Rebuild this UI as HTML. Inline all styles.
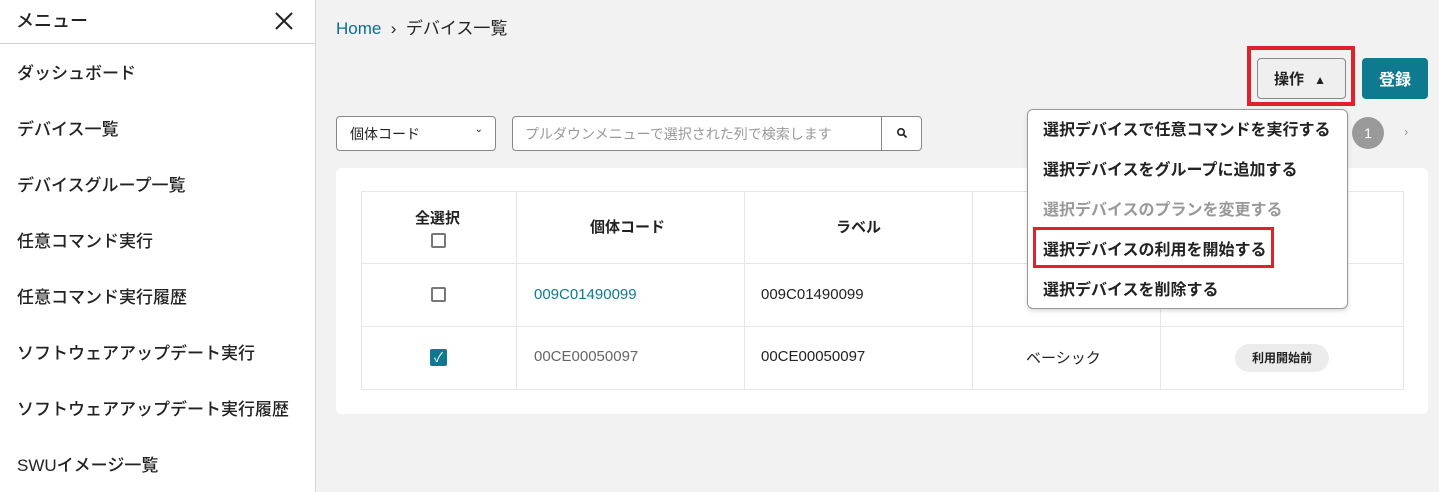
<!DOCTYPE html><html><head><meta charset="utf-8"><style>
*{box-sizing:border-box;margin:0;padding:0}
body{width:1439px;height:492px;overflow:hidden;background:#f2f2f2;font-family:"Liberation Sans","Noto Sans CJK JP",sans-serif;color:#222;position:relative}
.a{position:absolute}
.side{left:0;top:0;width:316px;height:492px;background:#fff;border-right:1px solid #d6d6d6}
.side .hd{height:44px;border-bottom:1px solid #cfcfcf;font-size:18px;font-weight:500;padding:7px 0 0 16px}
.side .it{position:absolute;left:17px;font-size:17px;font-weight:500}
.cb{position:absolute;width:15px;height:15px;border:2px solid #777;border-radius:2px;background:#fff}
.menu div{position:absolute;left:15px;font-size:16px;font-weight:700;color:#222}
</style></head><body>
<div class="a side"><div class="hd">メニュー</div>
<svg class="a" style="left:274px;top:11px" width="20" height="20"><path d="M2 2L18 18M18 2L2 18" stroke="#222" stroke-width="2"/></svg>
<div class="it" style="top:59px">ダッシュボード</div>
<div class="it" style="top:115px">デバイス一覧</div>
<div class="it" style="top:171px">デバイスグループ一覧</div>
<div class="it" style="top:227px">任意コマンド実行</div>
<div class="it" style="top:283px">任意コマンド実行履歴</div>
<div class="it" style="top:339px">ソフトウェアアップデート実行</div>
<div class="it" style="top:395px">ソフトウェアアップデート実行履歴</div>
<div class="it" style="top:451px">SWUイメージ一覧</div>
</div>
<div class="a" style="left:336px;top:14px;font-size:17px"><span style="color:#0b6f8f">Home</span> &nbsp;›&nbsp; デバイス一覧</div>
<div class="a" style="left:1247px;top:46px;width:108px;height:60px;border:4px solid #e0202a"></div>
<div class="a" style="left:1257px;top:58px;width:89px;height:41px;border:1px solid #888;border-radius:4px;background:#efefef;font-size:15px;font-weight:700;padding:9px 0 0 16px">操作 <span style="font-size:12px;margin-left:6px">▲</span></div>
<div class="a" style="left:1362px;top:58px;width:66px;height:41px;background:#0e7a90;border-radius:4px;color:#fff;font-size:16px;font-weight:700;padding:8px 0 0 17px">登録</div>
<div class="a" style="left:336px;top:116px;width:160px;height:35px;border:1px solid #888;border-radius:4px;background:#fff;font-size:14px;padding:7px 0 0 13px">個体コード<span style="position:absolute;right:12px;top:7px;font-size:10px">⌄</span></div>
<div class="a" style="left:512px;top:116px;width:410px;height:35px;border:1px solid #888;border-radius:4px;background:#fff;font-size:14px;color:#999;padding:7px 0 0 12px">プルダウンメニューで選択された列で検索します</div>
<div class="a" style="left:881px;top:116px;width:1px;height:35px;background:#888"></div>
<svg class="a" style="left:896px;top:127px" width="12" height="12"><circle cx="5" cy="5" r="3.2" stroke="#222" stroke-width="1.6" fill="none"/><path d="M7.5 7.5L10.5 10.5" stroke="#222" stroke-width="1.8"/></svg>
<div class="a" style="left:1352px;top:117px;width:32px;height:32px;border-radius:50%;background:#9a9a9a;color:#fff;font-size:14px;text-align:center;line-height:32px">1</div>
<div class="a" style="left:1404px;top:124px;color:#999;font-size:13px">›</div>
<div class="a" style="left:336px;top:168px;width:1092px;height:246px;background:#fff;border-radius:6px"></div>
<div class="a" style="left:361px;top:191px;width:1043px;height:199px;border:1px solid #e6e6e6"></div>
<div class="a" style="left:361px;top:263px;width:1043px;height:1px;background:#e6e6e6"></div>
<div class="a" style="left:361px;top:326px;width:1043px;height:1px;background:#e6e6e6"></div>
<div class="a" style="left:516px;top:191px;width:1px;height:199px;background:#e6e6e6"></div>
<div class="a" style="left:744px;top:191px;width:1px;height:199px;background:#e6e6e6"></div>
<div class="a" style="left:972px;top:191px;width:1px;height:199px;background:#e6e6e6"></div>
<div class="a" style="left:1160px;top:191px;width:1px;height:199px;background:#e6e6e6"></div>
<div class="a" style="left:415px;top:207px;font-size:15px;font-weight:700">全選択</div>
<div class="cb" style="left:431px;top:233px"></div>
<div class="a" style="left:590px;top:216px;font-size:15px;font-weight:700">個体コード</div>
<div class="a" style="left:836px;top:216px;font-size:15px;font-weight:700">ラベル</div>
<div class="cb" style="left:431px;top:287px"></div>
<div class="a" style="left:534px;top:286px;font-size:15px;color:#0e7a90">009C01490099</div>
<div class="a" style="left:761px;top:286px;font-size:15px">009C01490099</div>
<div class="a" style="left:430px;top:349px;width:17px;height:17px;background:#0e7a90;border-radius:2px;color:#fff;font-size:13px;text-align:center;line-height:17px">✓</div>
<div class="a" style="left:534px;top:348px;font-size:15px;color:#666">00CE00050097</div>
<div class="a" style="left:761px;top:348px;font-size:15px">00CE00050097</div>
<div class="a" style="left:1026px;top:347px;font-size:15px">ベーシック</div>
<div class="a" style="left:1235px;top:344px;width:94px;height:28px;background:#ececec;border-radius:14px;font-size:12px;font-weight:700;text-align:center;line-height:28px">利用開始前</div>
<div class="a menu" style="left:1027px;top:109px;width:321px;height:200px;background:#fff;border:1px solid #999;border-radius:6px;box-shadow:0 2px 4px rgba(0,0,0,.15)">
<div style="top:6px">選択デバイスで任意コマンドを実行する</div>
<div style="top:46px">選択デバイスをグループに追加する</div>
<div style="top:86px;color:#999">選択デバイスのプランを変更する</div>
<div style="top:126px">選択デバイスの利用を開始する</div>
<div style="top:166px">選択デバイスを削除する</div>
</div>
<div class="a" style="left:1033px;top:227px;width:241px;height:41px;border:3px solid #e0202a"></div>
</body></html>
